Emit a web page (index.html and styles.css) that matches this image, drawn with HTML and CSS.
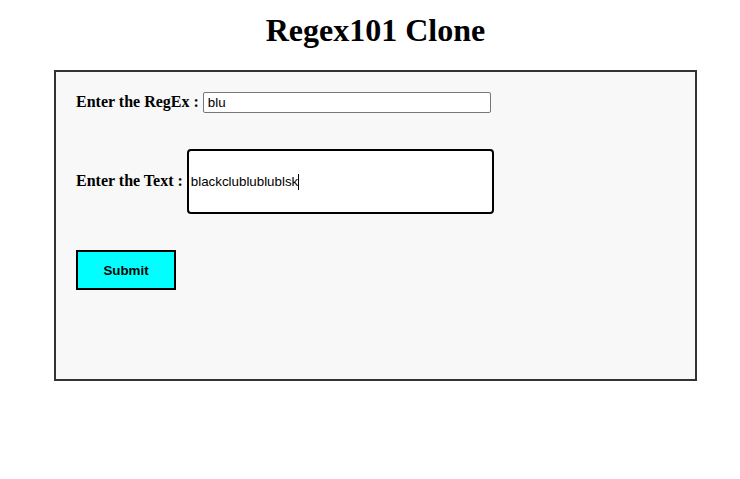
FILE: index.html
```html
<!DOCTYPE html>
<html>
<head>
<meta charset="utf-8">
<title>Regex101 Clone</title>
<link rel="stylesheet" href="styles.css">
</head>
<body>
<div class="page">
  <h1 class="title">Regex101 Clone</h1>
  <div class="panel">
    <form class="form">
      <div class="row">
        <label class="label" for="regex">Enter the RegEx :</label>
        <input class="regex-input" id="regex" type="text" value="blu">
      </div>
      <div class="row">
        <label class="label">Enter the Text :</label>
        <div class="text-input"><span class="text-value">blackclublublublsk</span><span class="caret"></span></div>
      </div>
      <div class="row">
        <button class="submit" type="button">Submit</button>
      </div>
    </form>
  </div>
</div>
</body>
</html>
```
FILE: styles.css
```css
html, body {
  margin: 0;
  padding: 0;
  background: #fff;
}

.page {
  padding-left: 11px;
  font-family: "Liberation Serif", "Times New Roman", serif;
  color: #000;
}

.title {
  margin: 12px 0 21px;
  font-size: 32px;
  font-weight: bold;
  text-align: center;
}

.panel {
  margin: 0 43px;
  height: 311px;
  box-sizing: border-box;
  border: 2px solid #333;
  background: #f8f8f8;
  padding: 20px 20px;
}

.form {
  display: flex;
  flex-direction: column;
  align-items: flex-start;
  gap: 36px;
}

.row {
  display: flex;
  align-items: baseline;
  gap: 4px;
}

.label {
  font-size: 16px;
  font-weight: bold;
}

.regex-input {
  box-sizing: border-box;
  width: 288px;
  height: 21px;
  margin: 0;
  padding: 1px 4px;
  border: 1px solid #767676;
  border-radius: 2px;
  background: #fff;
  font-family: "Liberation Sans", Arial, sans-serif;
  font-size: 13.33px;
  color: #000;
  outline: none;
}

.text-input {
  box-sizing: border-box;
  width: 307px;
  height: 65px;
  display: inline-flex;
  align-items: center;
  padding: 0 2px;
  border: 2px solid #000;
  border-radius: 4px;
  background: #fff;
  font-family: "Liberation Sans", Arial, sans-serif;
  font-size: 13.33px;
  color: #000;
}

.caret {
  display: inline-block;
  width: 1px;
  height: 16px;
  background: #000;
}

.submit {
  box-sizing: border-box;
  width: 100px;
  height: 40px;
  margin: 0;
  border: 2px solid #000;
  background: #00ffff;
  font-family: "Liberation Sans", Arial, sans-serif;
  font-size: 13.33px;
  font-weight: bold;
  color: #000;
}
```
